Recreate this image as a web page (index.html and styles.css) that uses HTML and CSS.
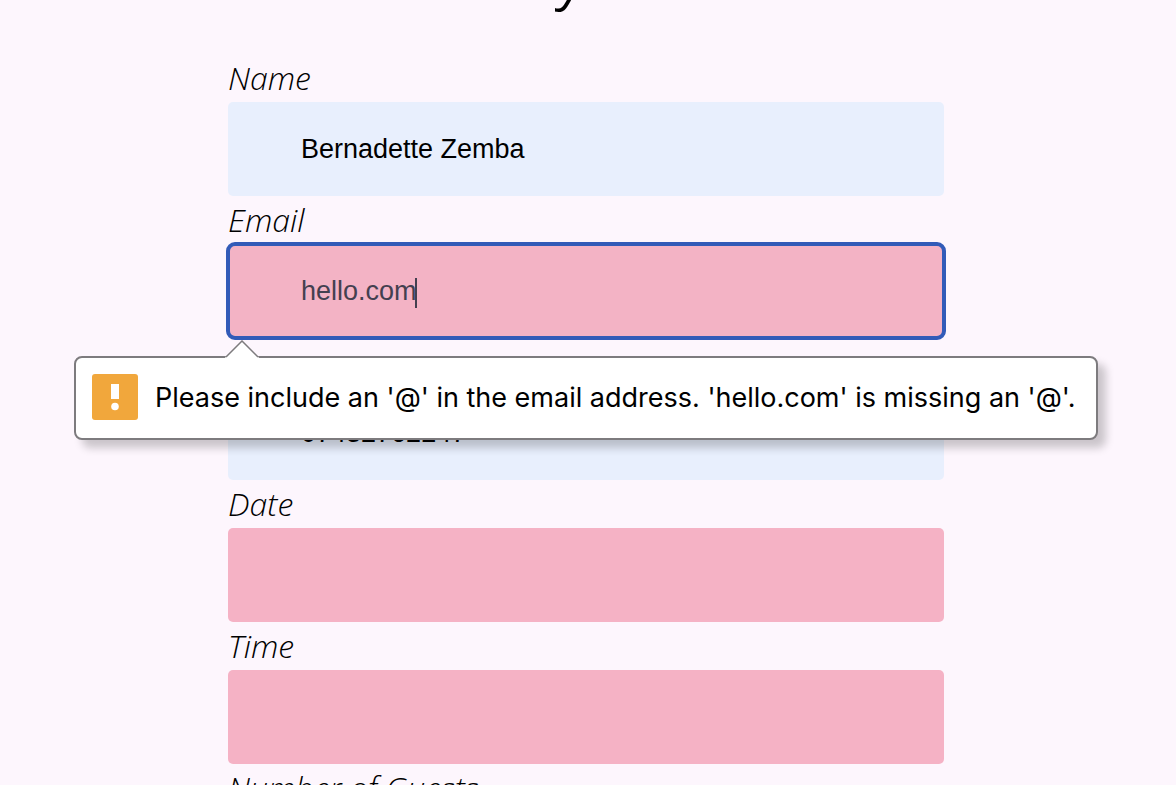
FILE: index.html
```html
<!DOCTYPE html>
<html lang="en">
<head>
<meta charset="utf-8">
<meta name="viewport" content="width=device-width, initial-scale=1">
<title>Enquiry</title>
<link rel="stylesheet" href="styles.css">
</head>
<body>
<main class="page">
  <h1 class="title">y</h1>
  <form class="form" novalidate>
    <div class="field">
      <label class="label" for="name">Name</label>
      <input class="input filled" id="name" type="text" value="Bernadette Zemba">
    </div>
    <div class="field">
      <label class="label" for="email">Email</label>
      <input class="input active" id="email" type="email" value="hello.com" aria-describedby="email-error">
      <span class="caret"></span>
      <div class="bubble" id="email-error" role="alert">
        <svg class="arrow" viewBox="0 0 34 18" aria-hidden="true"><path d="M0 18 L1 16.500 L17 1 L33 16.500 L34 18Z" fill="#fff"/><path d="M1 17 L17 1 L33 17" fill="none" stroke="#7d7b7e" stroke-width="1.500"/></svg>
        <svg class="warn" viewBox="0 0 46 46" aria-hidden="true"><rect width="46" height="46" rx="3" fill="#f1a73c"/><rect x="19" y="10" width="8" height="15" fill="#fff"/><circle cx="23" cy="32.500" r="3.800" fill="#fff"/></svg>
        <span>Please include an '@' in the email address. 'hello.com' is missing an '@'.</span>
      </div>
    </div>
    <div class="field unlabelled">
      <input class="input filled" type="tel" value="07432762247" aria-label="Phone">
    </div>
    <div class="field">
      <label class="label" for="date">Date</label>
      <input class="input" id="date" type="text">
    </div>
    <div class="field">
      <label class="label" for="time">Time</label>
      <input class="input" id="time" type="text">
    </div>
    <div class="field">
      <label class="label" for="guests">Number of Guests</label>
      <input class="input" id="guests" type="text">
    </div>
  </form>
</main>
</body>
</html>
```
FILE: styles.css
```css
* { box-sizing: border-box; }
html { overflow: hidden; }
body {
  margin: 0;
  height: 100vh;
  overflow: hidden;
  background: #fdf6fd;
  color: #000;
  font-family: "Open Sans", sans-serif;
}
.page { padding: 0 232px 0 228px; }
.title {
  margin: -52px 28px 42px 0;
  font-size: 52px;
  line-height: 64px;
  font-weight: 500;
  font-style: italic;
  text-align: center;
}
.form { display: flex; flex-direction: column; }
.field { position: relative; display: flex; flex-direction: column; }
.field.unlabelled { padding-top: 48px; }
.label {
  font-size: 32px;
  line-height: 48px;
  font-weight: 300;
  font-style: italic;
}
.input {
  width: 100%;
  height: 94px;
  padding: 0 73px;
  border: 0;
  border-radius: 5px;
  background: #f5b2c5;
  color: #444050;
  font-family: "Liberation Sans", Arial, sans-serif;
  font-size: 27px;
}
.input.filled { background: #e8effd; color: #000; }
.input.active {
  border-radius: 7px;
  background: #f3b3c5;
  outline: 4px solid #325bb8;
  outline-offset: -2px;
}
.caret {
  position: absolute;
  left: 187px;
  top: 82px;
  width: 2px;
  height: 30px;
  background: #444050;
}
.bubble {
  position: absolute;
  z-index: 2;
  top: 160px;
  left: -154px;
  right: -154px;
  display: flex;
  align-items: center;
  gap: 17px;
  height: 84px;
  padding: 0 16px 2px;
  border: 2px solid #7d7b7e;
  border-radius: 8px;
  background: #fff;
  box-shadow: 8px 8px 8px rgba(0, 0, 0, .2);
  font-family: Inter, sans-serif;
  font-size: 27px;
  white-space: nowrap;
}
.arrow { position: absolute; left: 149px; top: -18px; width: 34px; height: 18px; }
.warn { flex: none; width: 46px; height: 46px; }
```
